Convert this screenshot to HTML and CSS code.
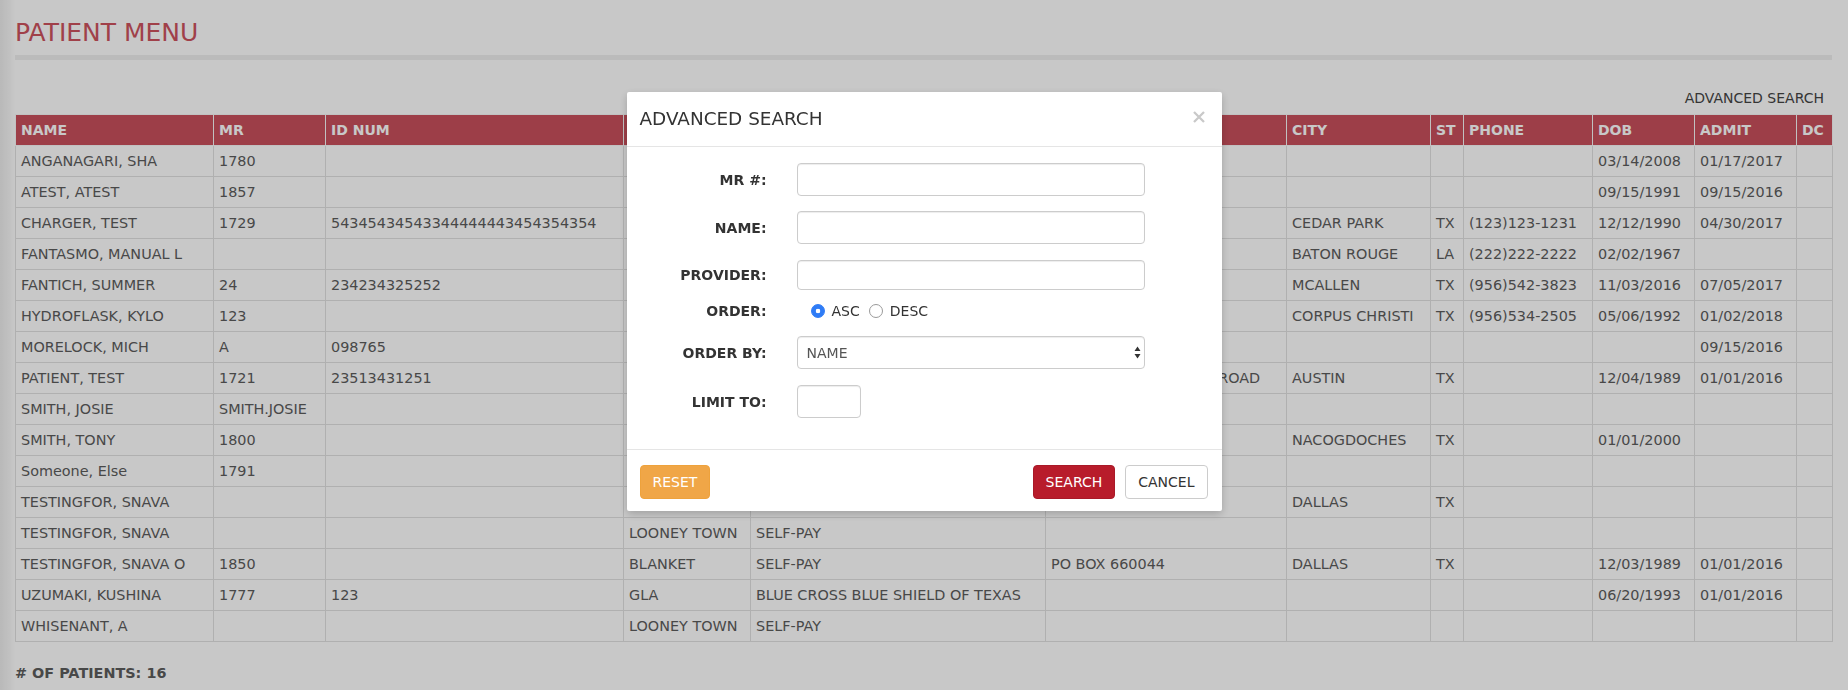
FILE: index.html
```html
<!DOCTYPE html>
<html lang="en">
<head>
<meta charset="utf-8">
<title>Patient Menu</title>
<link rel="stylesheet" href="styles.css">
</head>
<body>
<div class="page">
  <h1 class="page-title">PATIENT MENU</h1>
  <div class="toolbar"><a class="adv-link" href="#">ADVANCED SEARCH</a></div>
  <table class="patients">
    <colgroup>
      <col class="c-name"><col class="c-mr"><col class="c-id"><col class="c-loc"><col class="c-payer"><col class="c-addr"><col class="c-city"><col class="c-st"><col class="c-phone"><col class="c-dob"><col class="c-admit"><col class="c-dc">
    </colgroup>
    <thead>
      <tr><th>NAME</th><th>MR</th><th>ID NUM</th><th></th><th></th><th></th><th>CITY</th><th>ST</th><th>PHONE</th><th>DOB</th><th>ADMIT</th><th>DC</th></tr>
    </thead>
    <tbody>
      <tr><td>ANGANAGARI, SHA</td><td>1780</td><td></td><td></td><td></td><td></td><td></td><td></td><td></td><td>03/14/2008</td><td>01/17/2017</td><td></td></tr>
      <tr><td>ATEST, ATEST</td><td>1857</td><td></td><td></td><td></td><td></td><td></td><td></td><td></td><td>09/15/1991</td><td>09/15/2016</td><td></td></tr>
      <tr><td>CHARGER, TEST</td><td>1729</td><td>54345434543344444443454354354</td><td></td><td></td><td></td><td>CEDAR PARK</td><td>TX</td><td>(123)123-1231</td><td>12/12/1990</td><td>04/30/2017</td><td></td></tr>
      <tr><td>FANTASMO, MANUAL L</td><td></td><td></td><td></td><td></td><td></td><td>BATON ROUGE</td><td>LA</td><td>(222)222-2222</td><td>02/02/1967</td><td></td><td></td></tr>
      <tr><td>FANTICH, SUMMER</td><td>24</td><td>234234325252</td><td></td><td></td><td></td><td>MCALLEN</td><td>TX</td><td>(956)542-3823</td><td>11/03/2016</td><td>07/05/2017</td><td></td></tr>
      <tr><td>HYDROFLASK, KYLO</td><td>123</td><td></td><td></td><td></td><td></td><td>CORPUS CHRISTI</td><td>TX</td><td>(956)534-2505</td><td>05/06/1992</td><td>01/02/2018</td><td></td></tr>
      <tr><td>MORELOCK, MICH</td><td>A</td><td>098765</td><td></td><td></td><td></td><td></td><td></td><td></td><td></td><td>09/15/2016</td><td></td></tr>
      <tr><td>PATIENT, TEST</td><td>1721</td><td>23513431251</td><td></td><td></td><td>12 RANCH TO MARKET ROAD</td><td>AUSTIN</td><td>TX</td><td></td><td>12/04/1989</td><td>01/01/2016</td><td></td></tr>
      <tr><td>SMITH, JOSIE</td><td>SMITH.JOSIE</td><td></td><td></td><td></td><td></td><td></td><td></td><td></td><td></td><td></td><td></td></tr>
      <tr><td>SMITH, TONY</td><td>1800</td><td></td><td></td><td></td><td></td><td>NACOGDOCHES</td><td>TX</td><td></td><td>01/01/2000</td><td></td><td></td></tr>
      <tr><td>Someone, Else</td><td>1791</td><td></td><td></td><td></td><td></td><td></td><td></td><td></td><td></td><td></td><td></td></tr>
      <tr><td>TESTINGFOR, SNAVA</td><td></td><td></td><td></td><td></td><td></td><td>DALLAS</td><td>TX</td><td></td><td></td><td></td><td></td></tr>
      <tr><td>TESTINGFOR, SNAVA</td><td></td><td></td><td>LOONEY TOWN</td><td>SELF-PAY</td><td></td><td></td><td></td><td></td><td></td><td></td><td></td></tr>
      <tr><td>TESTINGFOR, SNAVA O</td><td>1850</td><td></td><td>BLANKET</td><td>SELF-PAY</td><td>PO BOX 660044</td><td>DALLAS</td><td>TX</td><td></td><td>12/03/1989</td><td>01/01/2016</td><td></td></tr>
      <tr><td>UZUMAKI, KUSHINA</td><td>1777</td><td>123</td><td>GLA</td><td>BLUE CROSS BLUE SHIELD OF TEXAS</td><td></td><td></td><td></td><td></td><td>06/20/1993</td><td>01/01/2016</td><td></td></tr>
      <tr><td>WHISENANT, A</td><td></td><td></td><td>LOONEY TOWN</td><td>SELF-PAY</td><td></td><td></td><td></td><td></td><td></td><td></td><td></td></tr>
    </tbody>
  </table>
  <p class="count"># OF PATIENTS: 16</p>
</div>

<div class="backdrop">
  <div class="modal">
    <div class="modal-header">
      <h4 class="modal-title">ADVANCED SEARCH</h4>
      <button class="close" type="button" aria-label="Close">
        <svg width="12" height="12" viewBox="0 0 12 12"><path d="M1 1 L11 11 M11 1 L1 11" stroke="#c9c9c9" stroke-width="2.3" fill="none"/></svg>
      </button>
    </div>
    <div class="modal-body">
      <div class="form-row r-mr">
        <label class="form-label">MR #:</label>
        <input class="form-input" type="text">
      </div>
      <div class="form-row r-name">
        <label class="form-label">NAME:</label>
        <input class="form-input" type="text">
      </div>
      <div class="form-row r-provider">
        <label class="form-label">PROVIDER:</label>
        <input class="form-input provider-input" type="text">
      </div>
      <div class="form-row r-order">
        <label class="form-label">ORDER:</label>
        <div class="radio-group">
          <input type="radio" name="order" checked><span class="radio-text">ASC</span>
          <input type="radio" name="order"><span class="radio-text">DESC</span>
        </div>
      </div>
      <div class="form-row r-orderby">
        <label class="form-label">ORDER BY:</label>
        <div class="select-wrap">
          <select class="form-select"><option>NAME</option></select>
          <svg class="select-arrows" width="7" height="13" viewBox="0 0 7 13"><path d="M3.5 0.5 L6.5 5 L0.5 5 Z M0.5 8 L6.5 8 L3.5 12.5 Z" fill="#333"/></svg>
        </div>
      </div>
      <div class="form-row r-limit">
        <label class="form-label">LIMIT TO:</label>
        <input class="form-input limit-input" type="text">
      </div>
    </div>
    <div class="modal-footer">
      <button class="btn btn-reset" type="button">RESET</button>
      <button class="btn btn-search" type="button">SEARCH</button>
      <button class="btn btn-cancel" type="button">CANCEL</button>
    </div>
  </div>
</div>
</body>
</html>
```

FILE: styles.css
```css
* { box-sizing: border-box; }

html, body {
  margin: 0;
  height: 100%;
}

body {
  font-family: "DejaVu Sans", Verdana, sans-serif;
  background: linear-gradient(to right, #ececec 0, #f6f6f6 9px, #fff 15px);
  overflow: hidden;
}

.page {
  padding: 18px 16px 0 15px;
}

.page-title {
  margin: 0;
  font-size: 25px;
  font-weight: normal;
  line-height: 30px;
  color: #cd525e;
  padding-bottom: 7px;
  border-bottom: 5px solid #efefef;
}

.toolbar {
  margin-top: 28px;
  text-align: right;
  font-size: 14px;
  line-height: 20px;
  padding-right: 8px;
}

.adv-link {
  color: #444;
  text-decoration: none;
}

.patients {
  margin-top: 6px;
  width: 100%;
  table-layout: fixed;
  border-collapse: collapse;
  font-size: 14.4px;
  line-height: 20px;
  color: #5c5c5c;
}

.c-name { width: 198px; }
.c-mr { width: 112px; }
.c-id { width: 298px; }
.c-loc { width: 127px; }
.c-payer { width: 295px; }
.c-addr { width: 241px; }
.c-city { width: 144px; }
.c-st { width: 33px; }
.c-phone { width: 129px; }
.c-dob { width: 102px; }
.c-admit { width: 102px; }
.c-dc { width: 36px; }

.patients th,
.patients td {
  padding: 5px 5px;
  text-align: left;
  white-space: nowrap;
  overflow: hidden;
}

.patients th {
  background: #c8505c;
  color: #fff;
  font-size: 14px;
  font-weight: bold;
  border: 1px solid #f6f6f6;
}

.patients td {
  border: 1px solid #e1e1e1;
}

.count {
  margin: 21px 0 0;
  font-size: 14.4px;
  line-height: 20px;
  font-weight: bold;
  color: #5c5c5c;
}

/* Modal */
.backdrop {
  position: fixed;
  inset: 0;
  background: rgba(0, 0, 0, 0.216);
}

.modal {
  width: 595px;
  margin: 92px auto 0;
  background: #fff;
  border-radius: 2px;
  box-shadow: 0 3px 9px rgba(0, 0, 0, 0.2);
  color: #333;
  font-size: 14px;
}

.modal-header {
  display: flex;
  justify-content: space-between;
  align-items: center;
  padding: 14px 14px 15px 13px;
  border-bottom: 1px solid #e5e5e5;
}

.modal-title {
  margin: 0;
  font-size: 18.4px;
  font-weight: normal;
  line-height: 25px;
  color: #333;
}

.close {
  margin: -4px 3px 0 0;
  padding: 0;
  border: 0;
  background: none;
  width: 12px;
  height: 12px;
  display: flex;
}

.modal-body {
  padding: 16px 0 31px 13px;
}

.form-row {
  display: grid;
  grid-template-columns: 127px 348px;
  column-gap: 30px;
  align-items: center;
}

.r-mr { margin-bottom: 15px; }
.r-name { margin-bottom: 16px; }
.r-provider { margin-bottom: 8px; }
.r-order { margin-bottom: 12px; }
.r-orderby { margin-bottom: 16px; }

.form-label {
  text-align: right;
  font-weight: bold;
  font-size: 14px;
  line-height: 20px;
  color: #333;
}

.form-input {
  width: 348px;
  height: 33px;
  margin: 0;
  padding: 6px 9px;
  border: 1px solid #ccc;
  border-radius: 4px;
  box-shadow: inset 0 1px 1px rgba(0, 0, 0, 0.075);
  font-family: inherit;
  font-size: 14px;
  color: #555;
  background: #fff;
}

.provider-input { height: 30px; }
.limit-input { width: 64px; }

.radio-group {
  display: flex;
  align-items: center;
  height: 26px;
  padding-left: 14px;
}

.radio-group input[type="radio"] {
  appearance: none;
  -webkit-appearance: none;
  width: 14px;
  height: 14px;
  margin: 0 7px 0 0;
  border: 1px solid #9a9a9a;
  border-radius: 50%;
  background: #fff;
}

.radio-group input[type="radio"]:checked {
  border-color: #2f7cf6;
  background: radial-gradient(circle, #fff 0 2px, #2f7cf6 2.6px);
}

.radio-text {
  font-size: 14px;
  line-height: 20px;
  color: #333;
  margin-right: 9px;
}

.select-wrap {
  position: relative;
  width: 348px;
  height: 33px;
}

.form-select {
  appearance: none;
  -webkit-appearance: none;
  width: 100%;
  height: 33px;
  margin: 0;
  padding: 0 9px;
  border: 1px solid #ccc;
  border-radius: 4px;
  box-shadow: inset 0 1px 1px rgba(0, 0, 0, 0.075);
  background: #fff;
  font-family: inherit;
  font-size: 14px;
  color: #555;
}

.select-arrows {
  position: absolute;
  right: 4px;
  top: 10px;
}

.modal-footer {
  display: flex;
  align-items: center;
  gap: 10px;
  padding: 15px 14px 12px 13px;
  border-top: 1px solid #e5e5e5;
}

.btn {
  height: 34px;
  padding: 0 12px;
  border: 1px solid transparent;
  border-radius: 4px;
  font-family: inherit;
  font-size: 14px;
  line-height: 20px;
}

.btn-reset {
  background: #f0a647;
  border-color: #eea23c;
  color: #fff;
}

.btn-search {
  margin-left: auto;
  background: #b81c2b;
  border-color: #a91928;
  color: #fff;
}

.btn-cancel {
  background: #fff;
  border-color: #ccc;
  color: #333;
}
```
